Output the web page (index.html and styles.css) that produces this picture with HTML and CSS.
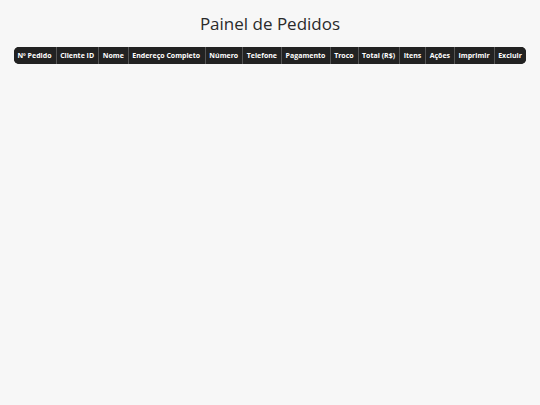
FILE: index.html
```html
<!DOCTYPE html>
<html lang="pt-BR">
<head>
<meta charset="utf-8">
<title>Painel de Pedidos</title>
<link rel="stylesheet" href="styles.css">
</head>
<body>
<main class="page">
  <h1 class="title">Painel de Pedidos</h1>
  <table class="orders">
    <thead>
      <tr>
        <th>Nº Pedido</th>
        <th>Cliente ID</th>
        <th>Nome</th>
        <th>Endereço Completo</th>
        <th>Número</th>
        <th>Telefone</th>
        <th>Pagamento</th>
        <th>Troco</th>
        <th>Total (R$)</th>
        <th>Itens</th>
        <th>Ações</th>
        <th>Imprimir</th>
        <th>Excluir</th>
      </tr>
    </thead>
    <tbody></tbody>
  </table>
</main>
</body>
</html>
```
FILE: styles.css
```css
html, body {
  margin: 0;
  padding: 0;
  background: #f7f7f7;
}
body {
  font-family: "Open Sans", "Noto Sans", sans-serif;
  color: #333;
}
.page {
  padding: 12px 14px 0;
}
.title {
  margin: 0 0 12px;
  text-align: center;
  font-size: 17px;
  font-weight: 400;
  line-height: 23px;
  color: #2a2a2a;
}
.orders {
  width: 100%;
  border-collapse: separate;
  border-spacing: 0;
  border-radius: 5px;
  overflow: hidden;
  background: #222;
}
.orders th {
  background: #222;
  color: #fff;
  font-size: 7px;
  font-weight: 700;
  text-align: left;
  padding: 4px 3.6px 4px 3.4px;
  line-height: 9px;
  border-left: 1px solid #555;
  white-space: nowrap;
}
.orders th:first-child {
  border-left: none;
}
```
